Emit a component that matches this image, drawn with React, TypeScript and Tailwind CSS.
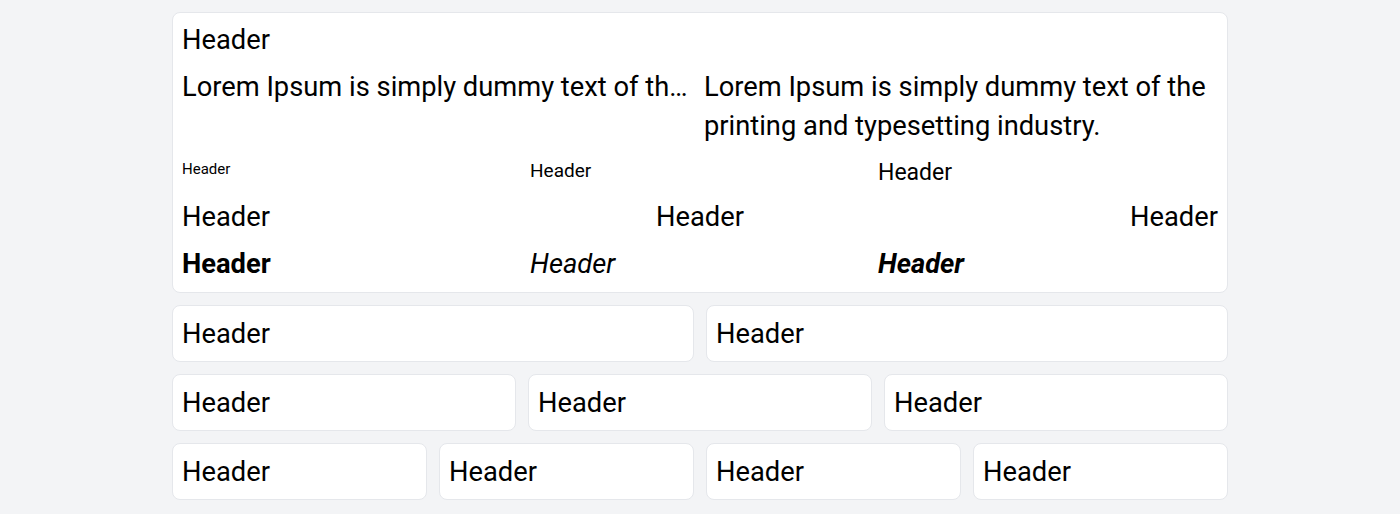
const LOREM = 'Lorem Ipsum is simply dummy text of the printing and typesetting industry.';

const Card = ({ children, className = '' }: { children: React.ReactNode; className?: string }) => (
  <div className={`bg-white border border-gray-200 rounded-lg px-[9px] min-w-0 ${className}`}>{children}</div>
);

const H = ({ className = '' }: { className?: string }) => (
  <div className={`text-[27.3px] leading-[39px] ${className}`}>Header</div>
);

export default function App() {
  return (
    <div className="min-h-screen bg-gray-100 text-black font-['Roboto',sans-serif]">
      <div className="w-[1056px] mx-auto py-3 flex flex-col gap-3">
        {/* main card */}
        <Card className="py-2">
          <div className="flex flex-col gap-2">
            <H />
            <div className="grid grid-cols-2 gap-2 text-[27.3px] leading-[39px]">
              <div className="truncate min-w-0">{LOREM}</div>
              <div className="min-w-0">{LOREM}</div>
            </div>
            <div className="grid grid-cols-3 gap-2 items-start h-[36px] pt-[5px]">
              <div className="text-[15px] leading-[1.4]">Header</div>
              <div className="text-[19px] leading-[1.3]">Header</div>
              <div className="text-[23px] leading-[1.2]">Header</div>
            </div>
            <div className="flex justify-between text-[27.3px] leading-[39px]">
              <div className="flex-1 text-left">Header</div>
              <div className="flex-1 text-center">Header</div>
              <div className="flex-1 text-right">Header</div>
            </div>
            <div className="grid grid-cols-3 gap-2 text-[27.3px] leading-[39px]">
              <div className="font-bold">Header</div>
              <div className="italic">Header</div>
              <div className="font-bold italic">Header</div>
            </div>
          </div>
        </Card>

        <div className="grid grid-cols-2 gap-3">
          <Card className="pt-[9px] pb-[7px]"><H /></Card>
          <Card className="pt-[9px] pb-[7px]"><H /></Card>
        </div>
        <div className="grid grid-cols-3 gap-3">
          <Card className="pt-[9px] pb-[7px]"><H /></Card>
          <Card className="pt-[9px] pb-[7px]"><H /></Card>
          <Card className="pt-[9px] pb-[7px]"><H /></Card>
        </div>
        <div className="grid grid-cols-4 gap-3">
          <Card className="pt-[9px] pb-[7px]"><H /></Card>
          <Card className="pt-[9px] pb-[7px]"><H /></Card>
          <Card className="pt-[9px] pb-[7px]"><H /></Card>
          <Card className="pt-[9px] pb-[7px]"><H /></Card>
        </div>
      </div>
    </div>
  );
}
